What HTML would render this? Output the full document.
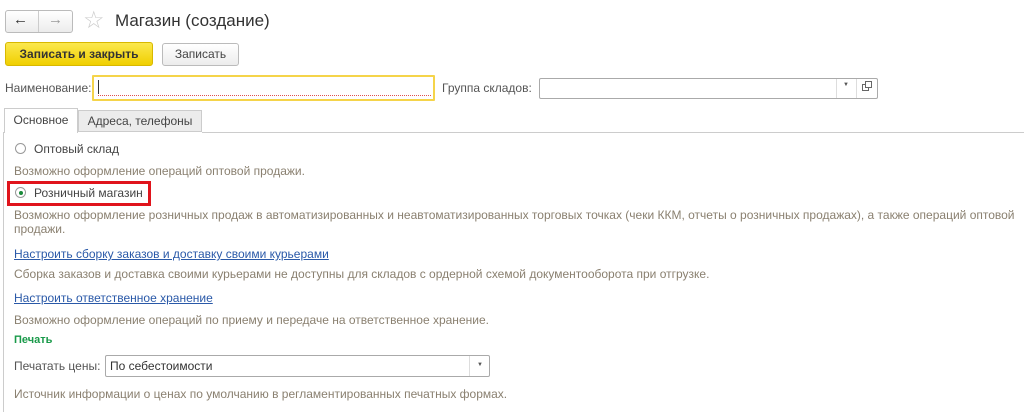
<!DOCTYPE html>
<html><head><meta charset="utf-8"><style>
body{margin:0;width:1024px;height:409px;background:#fff;font-family:"Liberation Sans",Arial,sans-serif;font-size:12px;color:#444;position:relative;overflow:hidden}
.a{position:absolute;white-space:nowrap}
.g{color:#8a8070}
.lnk{color:#2a59a8;text-decoration:underline}
.btn{position:absolute;border:1px solid #bbb;border-radius:3px;background:linear-gradient(#fff,#ececec);box-sizing:border-box;text-align:center}
.inp{position:absolute;border:1px solid #aaa;border-radius:2px;background:#fff;box-sizing:border-box}
</style></head><body>
<div class="btn" style="left:5px;top:10px;width:68px;height:23px"></div>
<div class="a" style="left:38px;top:11px;width:1px;height:21px;background:#ccc"></div>
<div class="a" style="left:13px;top:11px;font-size:15px;color:#333">&#8592;</div>
<div class="a" style="left:48px;top:11px;font-size:15px;color:#999">&#8594;</div>
<div class="a" style="left:83px;top:6px;font-size:24px;color:#ccc">&#9734;</div>
<div class="a" style="left:115px;top:11px;font-size:17px;color:#333">Магазин (создание)</div>
<div class="btn" style="left:5px;top:42px;width:148px;height:24px;background:linear-gradient(#fbe84e,#f0cf00);border-color:#d8b800;color:#333;font-weight:bold;line-height:22px">Записать и закрыть</div>
<div class="btn" style="left:162px;top:43px;width:77px;height:23px;line-height:21px;color:#444">Записать</div>
<div class="a" style="left:5px;top:81px;color:#555">Наименование:</div>
<div class="inp" style="left:92px;top:75px;width:343px;height:26px;border:2px solid #f5d44a;border-radius:1px"></div>
<div class="a" style="left:98px;top:80px;width:1px;height:14px;background:#333"></div>
<div class="a" style="left:98px;top:95px;width:333px;border-bottom:1px dotted #e05050"></div>
<div class="a" style="left:442px;top:81px;color:#555">Группа складов:</div>
<div class="inp" style="left:539px;top:78px;width:339px;height:21px"></div>
<div class="a" style="left:836px;top:79px;width:1px;height:19px;background:#ddd"></div>
<div class="a" style="left:856px;top:79px;width:1px;height:19px;background:#ddd"></div>
<div class="a" style="left:843px;top:82px;font-size:6px;color:#555">&#9660;</div>
<div class="a" style="left:862px;top:84px;width:5px;height:5px;border:1px solid #666"></div>
<div class="a" style="left:865px;top:81px;width:5px;height:5px;border:1px solid #666;background:#fff"></div>
<div class="a" style="left:4px;top:108px;width:74px;height:25px;border:1px solid #ccc;border-bottom:none;background:#fff;box-sizing:border-box;text-align:center;line-height:23px;color:#444">Основное</div>
<div class="a" style="left:78px;top:110px;width:124px;height:22px;border:1px solid #ccc;background:#ececec;box-sizing:border-box;text-align:center;line-height:20px;color:#444">Адреса, телефоны</div>
<div class="a" style="left:202px;top:132px;width:830px;height:1px;background:#ccc"></div>
<div class="a" style="left:3px;top:132px;width:1px;height:280px;background:#ccc"></div>
<div class="a" style="left:15px;top:143px;width:11px;height:11px;border:1px solid #999;border-radius:50%;box-sizing:border-box"></div>
<div class="a" style="left:34px;top:142px;color:#444">Оптовый склад</div>
<div class="a g" style="left:14px;top:164px">Возможно оформление операций оптовой продажи.</div>
<div class="a" style="left:7px;top:181px;width:144px;height:25px;border:3px solid #e0141c;box-sizing:border-box"></div>
<div class="a" style="left:15px;top:187px;width:11px;height:11px;border:1px solid #999;border-radius:50%;box-sizing:border-box"></div>
<div class="a" style="left:19px;top:191px;width:4px;height:4px;background:#1a8a3a;border-radius:50%"></div>
<div class="a" style="left:34px;top:186px;color:#444">Розничный магазин</div>
<div class="a g" style="left:14px;top:208px">Возможно оформление розничных продаж в автоматизированных и неавтоматизированных торговых точках (чеки ККМ, отчеты о розничных продажах), а также операций оптовой</div>
<div class="a g" style="left:14px;top:222px">продажи.</div>
<div class="a lnk" style="left:14px;top:247px">Настроить сборку заказов и доставку своими курьерами</div>
<div class="a g" style="left:14px;top:267px">Сборка заказов и доставка своими курьерами не доступны для складов с ордерной схемой документооборота при отгрузке.</div>
<div class="a lnk" style="left:14px;top:291px">Настроить ответственное хранение</div>
<div class="a g" style="left:14px;top:313px">Возможно оформление операций по приему и передаче на ответственное хранение.</div>
<div class="a" style="left:14px;top:334px;color:#1a9a4a;font-weight:bold;font-size:11px">Печать</div>
<div class="a" style="left:14px;top:359px;color:#555">Печатать цены:</div>
<div class="inp" style="left:105px;top:355px;width:385px;height:22px"></div>
<div class="a" style="left:110px;top:359px;color:#333">По себестоимости</div>
<div class="a" style="left:469px;top:356px;width:1px;height:20px;background:#ddd"></div>
<div class="a" style="left:477px;top:362px;font-size:6px;color:#555">&#9660;</div>
<div class="a g" style="left:14px;top:387px">Источник информации о ценах по умолчанию в регламентированных печатных формах.</div>
</body></html>
